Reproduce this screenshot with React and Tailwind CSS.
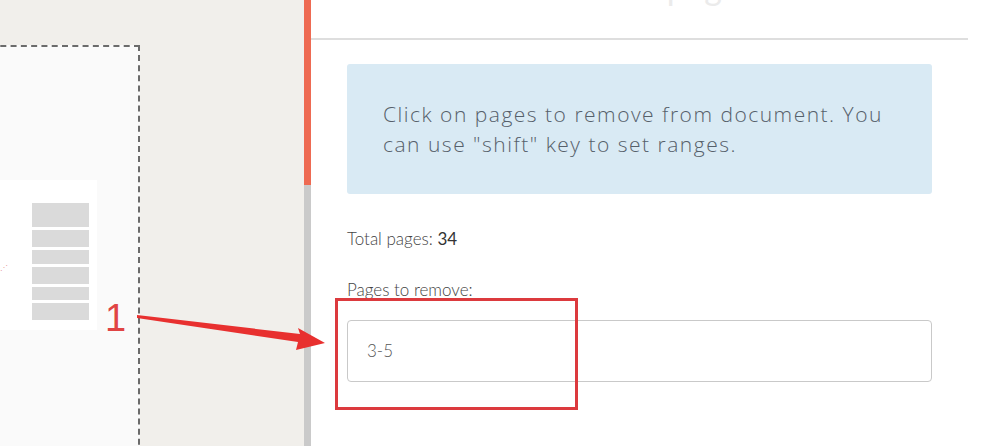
export default function App() {
  const boxes = [24, 17, 14, 17, 13, 17];
  return (
    <div className="relative w-[981px] h-[446px] overflow-hidden flex bg-white font-['Lato',sans-serif]">
      {/* Left canvas */}
      <div className="relative w-[304px] h-full bg-[#f1efeb] overflow-hidden pt-[45px]">
        <div className="relative -ml-[10px] w-[150px] h-[420px] bg-[#fafafa] border-t-2 border-r-2 border-dashed border-[#6b6b6b]">
          <div className="absolute left-[10px] top-[133px] w-[97px] h-[150px] bg-white flex flex-col items-end pr-[8px] pt-[23px]">
            <div className="flex flex-col gap-[3px] w-[57px]">
              {boxes.map((h, i) => (
                <div key={i} className="bg-[#dadada]" style={{ height: h }} />
              ))}
            </div>
          </div>
          <div className="absolute left-[10px] top-[216px] w-[7px] h-[8px] text-[#e7a0a0] text-[8px] leading-none">⋰</div>
        </div>
      </div>
      {/* Scrollbar */}
      <div className="w-[7px] h-full flex flex-col">
        <div className="h-[185px] bg-[#ee6a52]" />
        <div className="flex-1 bg-[#cacaca]" />
      </div>
      {/* Right panel */}
      <div className="flex-1 h-full bg-white flex flex-col">
        <div className="h-[40px] mr-[13px] border-b-2 border-[#dedede] flex justify-center">
          <div className="-mt-[31px] text-[34px] leading-[36px] text-[#ebebeb] tracking-wide pl-[10px]">Remove pages</div>
        </div>
        <div className="pl-[36px] pr-[49px] flex flex-col">
          <div className="mt-[24px] bg-[#d9eaf4] rounded-[3px] pl-[36px] pr-[40px] py-[35px] text-[21px] leading-[30px] text-[#56606a] font-['Open_Sans',sans-serif] font-light tracking-[1.5px]">
            Click on pages to remove from document. You can use "shift" key to set ranges.
          </div>
          <div className="mt-[33px] text-[17px] leading-[24px] text-[#444] font-light">
            Total pages: <span className="font-normal text-[#333]">34</span>
          </div>
          <div className="mt-[27px] text-[17px] leading-[24px] text-[#444] font-light">Pages to remove:</div>
          <div className="mt-[18px] h-[62px] border border-[#c9c9c9] rounded-[4px] flex items-center pl-[19px] text-[17px] text-[#555] font-light">
            3-5
          </div>
        </div>
      </div>

      {/* Annotation overlays */}
      <div className="absolute left-[335px] top-[298px] w-[243px] h-[112px] border-[3px] border-[#dc3a3e]" />
      <div className="absolute left-[105px] top-[298px] text-[38px] leading-[40px] text-[#e04444] font-['Liberation_Sans',sans-serif] font-light">1</div>
      <svg className="absolute left-0 top-0" width="981" height="446" viewBox="0 0 981 446">
        <polygon points="137,315 300,334 298,328 325,343 296,350 298,342 137,318" fill="#e8302f" />
      </svg>
    </div>
  );
}
